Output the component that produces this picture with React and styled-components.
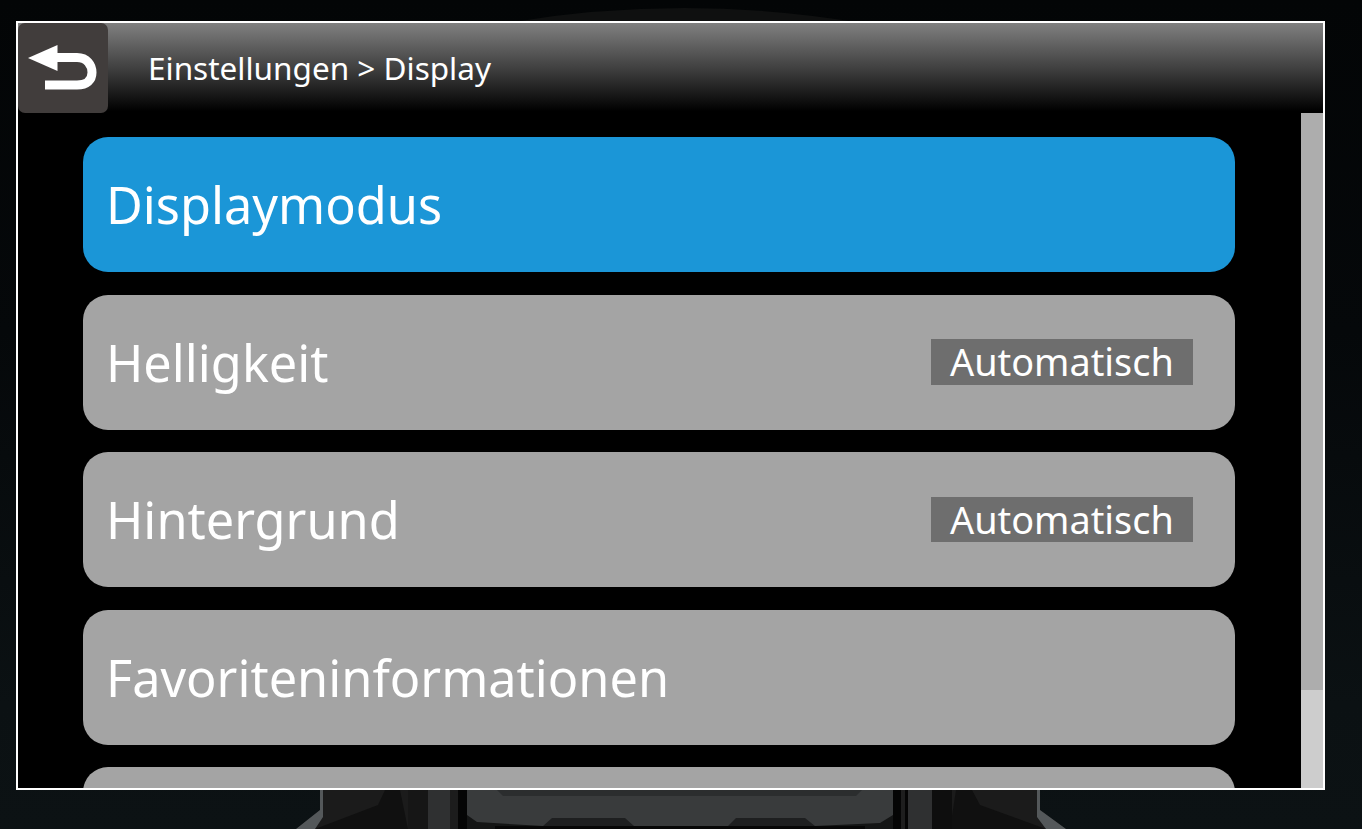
import React from "react";
import styled, { createGlobalStyle } from "styled-components";

const Global = createGlobalStyle`
  html, body { margin: 0; padding: 0; height: 100%; background: #05080a; overflow: hidden; }
  #root { height: 100%; }
  * { box-sizing: border-box; }
`;

const Page = styled.div`
  position: relative;
  width: 1362px;
  height: 829px;
  overflow: hidden;
  padding: 21px 0 0 16px;
  background: linear-gradient(180deg, #030506 0%, #05080a 40%, #0b1113 85%, #0c1214 100%);
  font-family: "Noto Sans", "Open Sans", sans-serif;
`;

const Scenery = styled.svg`
  position: absolute;
  inset: 0;
`;

const Screen = styled.div`
  position: relative;
  width: 1309px;
  height: 769px;
  border: 2px solid #fff;
  background: #000;
  display: flex;
  flex-direction: column;
  overflow: hidden;
`;

const Header = styled.header`
  flex: 0 0 90px;
  display: flex;
  align-items: center;
  background: linear-gradient(180deg, #808080 0%, #404040 50%, #000 98%);
`;

const BackButton = styled.button`
  width: 90px;
  height: 90px;
  border: 0;
  padding: 0;
  border-radius: 7px;
  background: #413d3c;
  display: block;
`;

const Crumb = styled.span`
  margin-left: 40px;
  color: #fff;
  font-size: 31.5px;
  line-height: 44px;
  white-space: nowrap;
`;

const Body = styled.div`
  flex: 1;
  min-height: 0;
  display: flex;
`;

const List = styled.div`
  flex: 1;
  padding: 24px 0 0 65px;
  display: flex;
  flex-direction: column;
  gap: 22.5px;
  overflow: hidden;
`;

const Row = styled.div`
  flex: 0 0 135px;
  width: 1152px;
  padding: 0 42px 0 23px;
  border-radius: 25px;
  display: flex;
  align-items: center;
  justify-content: space-between;
  background: ${(p) => (p.$active ? "#1b96d7" : "#a4a4a4")};
  color: #fff;
`;

const Label = styled.span`
  padding-top: 1px;
  font-size: 50.45px;
  line-height: 68px;
  white-space: nowrap;
`;

const Value = styled.span`
  width: 262px;
  height: 45.5px;
  padding-left: 19px;
  background: #6e6e6e;
  color: #fff;
  font-size: 37.85px;
  line-height: 46px;
  white-space: nowrap;
`;

const ScrollTrack = styled.div`
  flex: 0 0 22px;
  background: #cdcdcd;
`;

const ScrollThumb = styled.div`
  height: 577px;
  background: #adadad;
`;

const BackIcon = () => (
  <svg width="90" height="90" viewBox="0 0 90 90" style={{ display: "block" }}>
    <path d="M10 35 L39.5 22 L39.5 48 Z" fill="#fff" />
    <path
      d="M38 34.5 H59 C69 34.5 74 42 74 49.5 C74 57 69 62 59 62 H27"
      fill="none"
      stroke="#fff"
      strokeWidth="9"
    />
  </svg>
);

const rows = [
  { label: "Displaymodus", active: true },
  { label: "Helligkeit", value: "Automatisch" },
  { label: "Hintergrund", value: "Automatisch" },
  { label: "Favoriteninformationen" },
  { label: "" },
];

export default function App() {
  return (
    <Page>
      <Global />
      <Scenery width="1362" height="829" viewBox="0 0 1362 829">
        <path d="M500 24 Q684 -8 868 24 Z" fill="#0f1010" />
        {/* device body */}
        <path d="M320 790 H1040 V810 L1066 829 H296 L320 810 Z" fill="#1b1b1b" />
        {/* light edges */}
        <path d="M320 790 H323 V817 L315 829 H296 L320 810 Z" fill="#54585a" />
        <path d="M1037 790 H1040 V810 L1066 829 H1046 L1037 817 Z" fill="#54585a" />
        {/* dark wedges */}
        <path d="M315 829 L378 805 L385 790 H400 L408 829 Z" fill="#101010" />
        <path d="M1046 829 L980 805 L972 790 H956 L950 829 Z" fill="#101010" />
        {/* pillars */}
        <rect x="408" y="790" width="20" height="39" fill="#161616" />
        <rect x="932" y="790" width="20" height="39" fill="#0e0e0e" />
        <rect x="428" y="790" width="22" height="39" fill="#2f3031" />
        <rect x="908" y="790" width="24" height="39" fill="#2f3031" />
        <rect x="450" y="790" width="8" height="39" fill="#1c1c1c" />
        <rect x="458" y="790" width="9" height="39" fill="#050505" />
        <rect x="893" y="790" width="8" height="39" fill="#050505" />
        <rect x="901" y="790" width="4" height="39" fill="#1e1e1e" />
        <rect x="905" y="790" width="3" height="39" fill="#050505" />
        {/* centre panel */}
        <rect x="467" y="815" width="426" height="14" fill="#141515" />
        <path d="M467 790 H893 V815 L880 823 L815 826 H728 L634 826 H543 L477 822 L467 815 Z" fill="#393b3c" />
        <path d="M497 790 L503 796 H856 L862 790 Z" fill="#2b2d2e" />
        <path d="M543 826 L552 818 H625 L634 826 Z" fill="#1e1f20" />
        <path d="M728 826 L736 818 H805 L815 826 Z" fill="#1e1f20" />
        <rect x="495" y="826" width="370" height="3" fill="#070707" />
      </Scenery>
      <Screen>
        <Header>
          <BackButton aria-label="Zurück">
            <BackIcon />
          </BackButton>
          <Crumb>Einstellungen &gt; Display</Crumb>
        </Header>
        <Body>
          <List>
            {rows.map((r, i) => (
              <Row key={i} $active={r.active}>
                <Label>{r.label}</Label>
                {r.value && <Value>{r.value}</Value>}
              </Row>
            ))}
          </List>
          <ScrollTrack>
            <ScrollThumb />
          </ScrollTrack>
        </Body>
      </Screen>
    </Page>
  );
}
